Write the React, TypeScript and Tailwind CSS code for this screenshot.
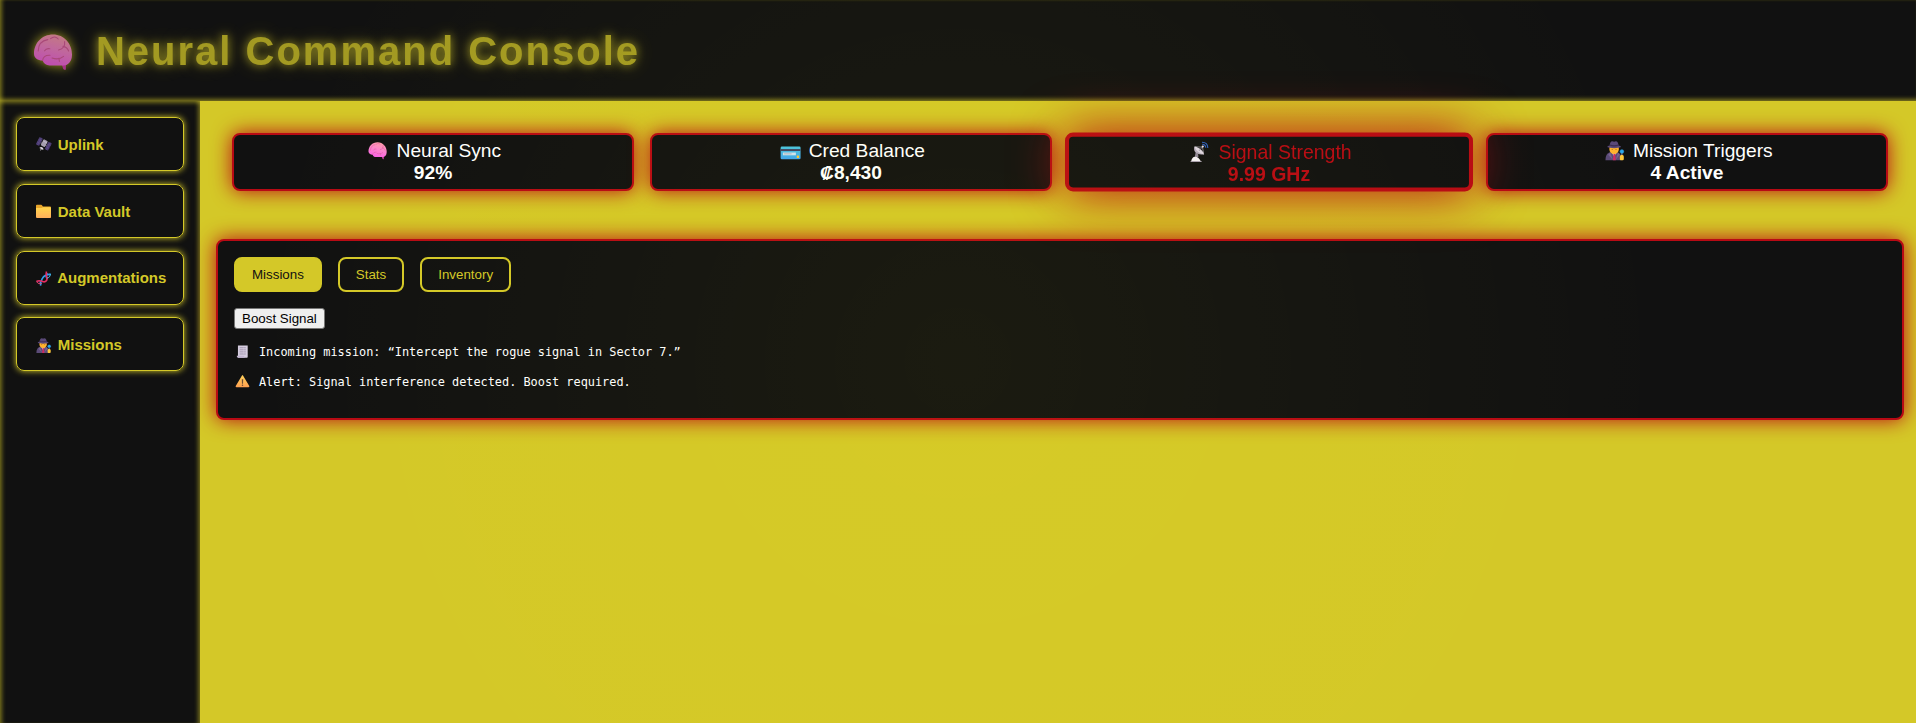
import type { ReactNode } from "react";

function Glyph({ children, glow = false }: { children: ReactNode; glow?: boolean }) {
  return (
    <span className="inline-flex w-[1.37em] justify-center align-[-0.165em]">
      <svg
        viewBox="0 0 20 20"
        className={
          glow
            ? "h-[1em] w-[1em] overflow-visible drop-shadow-[0_0_6px_#d4c828]"
            : "h-[1em] w-[1em] overflow-visible"
        }
        fill="none"
      >
        {children}
      </svg>
    </span>
  );
}

function Brain({ glow = false }: { glow?: boolean }) {
  return (
    <Glyph glow={glow}>
      <defs>
        <linearGradient id="brainFill" x1="14" y1="1" x2="10" y2="17" gradientUnits="userSpaceOnUse">
          <stop stopColor="#ff9fa6" />
          <stop offset="0.5" stopColor="#fb84cc" />
          <stop offset="1" stopColor="#fa62e6" />
        </linearGradient>
      </defs>
      <path d="M13.600 14.500h3l-.2 4.400c-1 .2-1.500-.5-1.600-1.400z" fill="#d63fa8" />
      <path
        d="M.5 11C.4 5.500 4.500 1.200 10 1.200c5.600 0 9.600 4.600 9.500 10.200 0 3.400-1.900 5.300-4.200 5.300H8.300c-1.800 0-3-1-3.500-2.400C2.300 14.200.6 13 .5 11z"
        fill="url(#brainFill)"
      />
      <path
        d="M2.600 9.500c.1-3.500 2-5.300 4.800-5.700M8.800 3.300c1.500-1.200 3-.8 3.800.2M15.800 4.800c.3 2.200-.8 3.600-3 4.200M15 7.200c1.500.2 2.300 1 2.800 2.300M4.800 14.200c.2-1.800 1.700-2.700 3.700-2.600M5.800 9.400c.6-1 1.500-1.300 2.600-1M9.500 13c1.800.6 4.200.5 5.800-.8M13 13.200l.2 1.500"
        stroke="#dd5c9c"
        strokeWidth="0.55"
        strokeLinecap="round"
      />
    </Glyph>
  );
}

function Satellite() {
  return (
    <Glyph>
      <g transform="rotate(28 10 10)">
        <rect x="0.800" y="3.500" width="5" height="11" rx="0.6" fill="#4a3b72" />
        <rect x="14.200" y="3.500" width="5" height="11" rx="0.6" fill="#4a3b72" />
        <path d="M3.300 3.500v11M.8 7h5M.8 11h5M16.700 3.500v11M14.200 7h5M14.200 11h5" stroke="#66528f" strokeWidth="0.6" />
        <path d="M5.800 9.500h8.400" stroke="#77717f" strokeWidth="1.500" />
        <rect x="7" y="3.500" width="6.200" height="9" rx="1" fill="#a79fb0" />
        <path d="M7 6h6.200" stroke="#cfc8d6" strokeWidth="0.800" />
        <path d="M7.300 16.600c.4-3.400 5.400-3.400 5.800 0z" fill="#dcd5e0" />
        <path d="M10.200 16.500v2.300" stroke="#ddd" />
      </g>
    </Glyph>
  );
}

function Folder() {
  return (
    <Glyph>
      <defs>
        <linearGradient id="folderFill" x1="10" y1="4" x2="10" y2="19" gradientUnits="userSpaceOnUse">
          <stop stopColor="#ffd64b" />
          <stop offset="1" stopColor="#ffae5c" />
        </linearGradient>
      </defs>
      <path d="M0 2.200C0 1.500.500 1 1.200 1h5.600c.7 0 1 .3 1.400.9l1 1.400h9.600c.7 0 1.200.5 1.200 1.200V9H0z" fill="#e9a52b" />
      <path d="M0 5.400h7.500l1.700-1.200h9.600c.7 0 1.200.5 1.200 1.200v12c0 .9-.5 1.400-1.400 1.400H1.400C.5 18.800 0 18.300 0 17.400z" fill="url(#folderFill)" />
    </Glyph>
  );
}

function Dna() {
  return (
    <Glyph>
      <path d="M3.200 12.800l3.300 4M11.500 6.500l3.500 4M14.500 2.500l3.500 3.500" stroke="#8d6fd8" strokeWidth="0.900" />
      <path d="M6.200 19.500C5.200 14.500 7 12.500 8.800 9.500 10 7 12.500 5 19.600 4.200" stroke="#2f9cec" strokeWidth="2.200" />
      <path d="M.6 14c3.800-2.200 6.200-.8 9 .4 4 .8 5.400-2.400 5-5.400C13.800 6 12.800 4 14 .6" stroke="#e62c63" strokeWidth="2.200" />
      <path d="M.8 14.200c1.800 2.600 4 3.400 6.800 2.400" stroke="#f04878" strokeWidth="1.300" />
      <path d="M14.600 9.500c2.800-.5 4.400-2.400 4.800-5.200" stroke="#45c3f0" strokeWidth="1.300" />
    </Glyph>
  );
}

function Detective() {
  return (
    <Glyph>
      <path d="M.5 20c.1-4.800 1.600-7.400 5-8.200h7.200c3.200.8 4.500 3.400 4.600 8.200z" fill="#5b4b77" />
      <path d="M7 12h5l-2.500 4.500z" fill="#cfc3da" />
      <path d="M9 13h1.500l.8 7H8.200z" fill="#cf2b62" />
      <path d="M4.600 6h9.800v2.800c0 2.800-2.200 4.700-4.900 4.700s-4.900-1.900-4.900-4.700z" fill="#ffb32e" />
      <path d="M5.500 12l-2.300 2.400 5 5.200zM13.500 12l2 2.400-4.500 5.200z" fill="#75618f" />
      <path d="M2.300 6.300c.3-.9 1.300-1.300 2.500-1.300C5 2.100 6 .2 7.600.2c.8 0 1.200.5 1.900.5s1.100-.5 1.900-.5c1.600 0 2.600 1.900 2.800 4.800 1.200 0 2.200.4 2.500 1.300-3 1.600-11.400 1.600-14.400 0z" fill="#5a4978" />
      <path d="M4.900 4.200c2.700 1 6.500 1 9.200 0" stroke="#3b2d53" strokeWidth="1.100" />
      <path d="M7.500 8.300v1M11.500 8.300v1" stroke="#8a5424" strokeWidth="0.800" />
      <path d="M17.600 12.500v3" stroke="#a39ab0" strokeWidth="1" />
      <circle cx="17.600" cy="11" r="2.100" fill="#2ba8ee" stroke="#2479ad" strokeWidth="0.400" />
      <path d="M15.500 16.300c0-1 .8-1.600 1.900-1.600s2.200.5 2.200 1.600v2.400c0 .8-.6 1.300-1.400 1.300h-1.300c-.8 0-1.400-.5-1.400-1.300z" fill="#ffc83a" />
    </Glyph>
  );
}

function CreditCard() {
  return (
    <Glyph>
      <defs>
        <linearGradient id="cardFill" x1="10" y1="5" x2="10" y2="19" gradientUnits="userSpaceOnUse">
          <stop stopColor="#49c5df" />
          <stop offset="1" stopColor="#3fa4ee" />
        </linearGradient>
      </defs>
      <rect x="-0.400" y="5.800" width="20.800" height="13.200" rx="1.300" fill="url(#cardFill)" />
      <path d="M-.4 8.400h20.800v2H-.4z" fill="#41405e" />
      <rect x="2" y="12" width="13.500" height="2.900" fill="#cfe2ef" />
      <path d="M3 13.400h8" stroke="#a9a4b6" strokeWidth="0.800" />
      <rect x="16.400" y="15.200" width="2.400" height="2.400" rx="0.400" fill="#ffc52e" />
    </Glyph>
  );
}

function Dish() {
  return (
    <Glyph>
      <g transform="translate(0 -1)">
        <path d="M12.500 5.500L5.500 5.200M13 5.500l1 6" stroke="#c9c2d0" strokeWidth="0.600" />
        <path d="M6 10.500l-1 5.500h3.800l-.2-3.500z" fill="#8f8697" />
        <path d="M4.700 5c-1.600 5 2 9.200 10 8z" fill="#b7adbf" />
        <path d="M4.700 5c4.600.7 8.600 3.700 10 8-4.500-.4-8.600-3.600-10-8z" fill="#dcd4e1" />
        <path d="M9.500 9.300l3.700-4.300" stroke="#8d8495" strokeWidth="0.800" />
        <circle cx="13.300" cy="5" r="1.100" fill="#e9e2ee" />
        <path d="M1.400 20c.4-2.700 1.800-4.600 4-4.600 2.400 0 4.800 1.900 5.800 4.600z" fill="#f4f0f6" />
        <path d="M.8 19.800h11.300v.9H.8z" fill="#b7adbf" />
        <path d="M12.500.6c3.600 0 5.900 2.300 6 5.800M12.800 2.700c2.200 0 3.500 1.400 3.600 3.500" stroke="#2f62c4" strokeWidth="1.100" />
      </g>
    </Glyph>
  );
}

function Receipt() {
  return (
    <Glyph>
      <path d="M3 .8h15v17.200c0 1-.7 1.700-1.600 1.700H3z" fill="#d6cde0" />
      <path d="M1.200 16.600h11.200c0 1.900.9 3.100 2.500 3.100H3.400c-1.400 0-2.200-1.200-2.200-3.100z" fill="#c3b6d2" />
      <path d="M5.500 4.200h9.500M5.500 7.400h9.500M5.500 10.600h9.500M5.500 13.800h9.500" stroke="#8d819c" strokeWidth="1.100" />
      <path d="M12 3.500v11" stroke="#d6cde0" strokeWidth="0.800" />
    </Glyph>
  );
}

function Warning() {
  return (
    <Glyph>
      <defs>
        <linearGradient id="warnFill" x1="10" y1="1" x2="10" y2="19" gradientUnits="userSpaceOnUse">
          <stop stopColor="#ffd05a" />
          <stop offset="1" stopColor="#ff9f50" />
        </linearGradient>
      </defs>
      <path d="M9 1.200c.5-.9 1.500-.9 2 0l9.400 15.900c.5.900-.1 1.700-1.100 1.700H.7c-1 0-1.600-.8-1.100-1.700z" fill="url(#warnFill)" />
      <path d="M8.900 6.500h2.200l-.3 6.800H9.200z" fill="#6d4c33" />
      <circle cx="10" cy="15.800" r="1.200" fill="#6d4c33" />
    </Glyph>
  );
}

const navItems = [
  { icon: <Satellite />, label: "Uplink" },
  { icon: <Folder />, label: "Data Vault" },
  { icon: <Dna />, label: "Augmentations" },
  { icon: <Detective />, label: "Missions" },
];

const stats = [
  { icon: <Brain />, label: "Neural Sync", value: "92%", alert: false },
  { icon: <CreditCard />, label: "Cred Balance", value: "₡8,430", alert: false },
  { icon: <Dish />, label: "Signal Strength", value: "9.99 GHz", alert: true },
  { icon: <Detective />, label: "Mission Triggers", value: "4 Active", alert: false },
];

const tabs = ["Missions", "Stats", "Inventory"];

export default function App() {
  return (
    <div className="relative flex h-[723px] flex-col overflow-hidden bg-[#d4c828] font-['Liberation_Sans',Arial,sans-serif] text-white">
      <header className="h-[101px] shrink-0 bg-[#111111] pt-[28px] pl-[26px] shadow-[inset_0_-5px_4px_-3px_#d4c82890,inset_5px_0_4px_-3px_#d4c82880,inset_0_3px_3px_-3px_#d4c82830]">
        <h1 className="text-[40px] leading-[46px] font-bold tracking-[2px] whitespace-nowrap text-[#d4c828] opacity-75 [text-shadow:0_0_10px_#d4c828,0_0_20px_#d4c82860]">
          <Brain glow /> <span className="ml-0.5">Neural Command Console</span>
        </h1>
      </header>

      <div className="flex min-h-0 flex-1">
        <nav className="flex w-[200px] shrink-0 flex-col gap-[12.800px] bg-[#111111] px-4 pt-4 shadow-[inset_-5px_0_4px_-3px_#d4c82880,inset_5px_0_4px_-3px_#d4c82880,inset_0_5px_4px_-3px_#d4c82880]">
          {navItems.map((item) => (
            <a
              key={item.label}
              className="flex h-[54px] shrink-0 items-center rounded-lg border border-[#d4c828] pt-0.5 pl-4 text-[15px] font-bold whitespace-pre text-[#d4c828] shadow-[0_0_6px_#d4c828]"
            >
              <span>{item.icon} {item.label}</span>
            </a>
          ))}
        </nav>

        <main className="relative min-w-0 flex-1 pt-8 pr-3 pl-4">
          <section className="mr-4 ml-4 grid grid-cols-4 gap-4">
            {stats.map((s) => (
              <div
                key={s.label}
                className={
                  s.alert
                    ? "h-[58px] scale-[1.015] rounded-lg border-4 border-[#b80a14] bg-[#111111] pt-[5px] text-center text-[19.2px] leading-[22px] text-[#b80a14] shadow-[0_0_50px_#b80a14]"
                    : "h-[58px] rounded-lg border-2 border-[#b80a14] bg-[#111111] pt-[5px] text-center text-[19.2px] leading-[22px] shadow-[0_0_20px_#b80a14]"
                }
              >
                <div className="h-[22px] whitespace-nowrap">
                  {s.icon} {s.label}
                </div>
                <div className="h-[22px] font-bold">{s.value}</div>
              </div>
            ))}
          </section>

          <section className="mt-12 h-[181px] rounded-lg border-2 border-[#b80a14] bg-[#111111] p-4 shadow-[0_0_20px_#b80a14]">
            <div className="flex gap-4">
              {tabs.map((t, i) => (
                <button
                  key={t}
                  className={
                    i === 0
                      ? "h-[35px] rounded-lg border-2 border-[#d4c828] bg-[#d4c828] px-4 text-[13.333px] leading-[15px] text-[#111111]"
                      : "h-[35px] rounded-lg border-2 border-[#d4c828] bg-[#111111] px-4 text-[13.333px] leading-[15px] text-[#d4c828]"
                  }
                >
                  {t}
                </button>
              ))}
            </div>
            <button className="mt-4 block h-[21px] rounded-[3px] border border-[#767676] bg-[#efefef] px-[7px] text-[13.333px] leading-[19px] text-black">
              Boost Signal
            </button>
            <div className="mt-[15px] font-['DejaVu_Sans_Mono',monospace] text-[11.880px] leading-[15px] whitespace-pre">
              <p className="h-[15px]">
                <span className="text-[13px]"><Receipt /></span> Incoming mission: “Intercept the rogue signal in Sector 7.”
              </p>
              <p className="mt-[15px] h-[15px]">
                <span className="text-[13px]"><Warning /></span> Alert: Signal interference detected. Boost required.
              </p>
            </div>
          </section>
        </main>
      </div>

      <div className="pointer-events-none absolute inset-0 bg-[radial-gradient(circle,rgba(255,255,0,0.045),transparent_70%)]" />
    </div>
  );
}
